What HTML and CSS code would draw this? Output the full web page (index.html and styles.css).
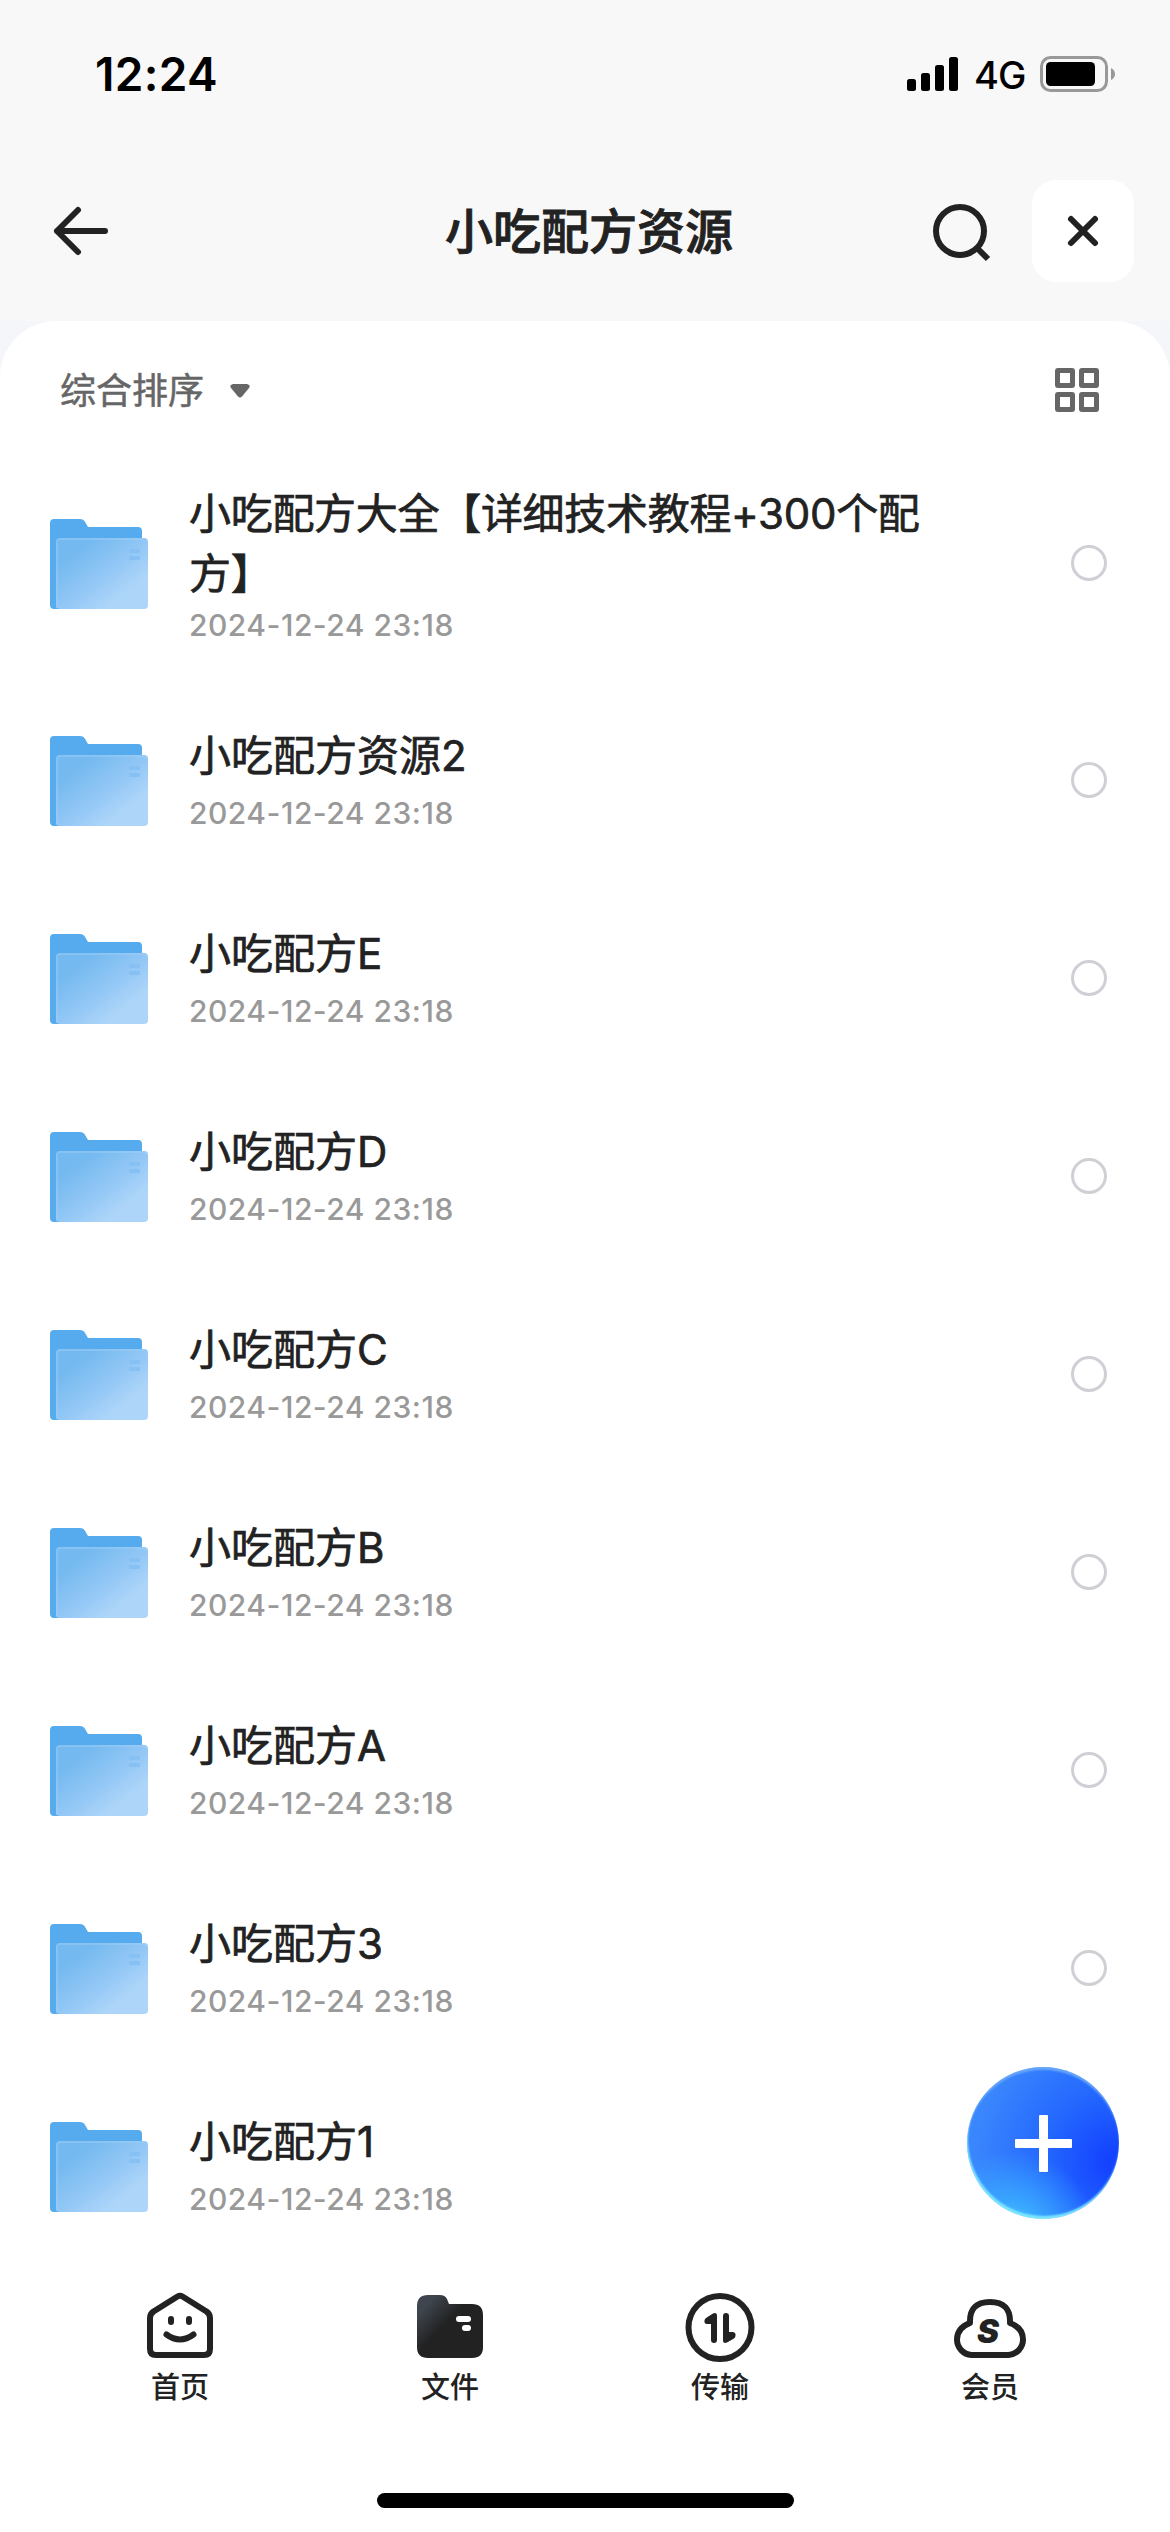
FILE: index.html
```
<!DOCTYPE html>
<html lang="zh-CN">
<head>
    <meta charset="UTF-8">
    <meta name="viewport" content="width=device-width, initial-scale=1.0">
    <title>小吃配方资源</title>
    <link rel="stylesheet" href="styles.css">
</head>
<body>
    <!-- 公用的文件夹图标 -->
    <svg class="defs" width="0" height="0">
        <defs>
            <linearGradient id="front" x1="0.1" y1="0.15" x2="0.85" y2="0.9">
                <stop offset="0.1" stop-color="#74b9ef"/>
                <stop offset="0.55" stop-color="#94c8f6"/>
                <stop offset="0.85" stop-color="#add5f9"/>
            </linearGradient>
            <symbol id="folder" viewBox="0 0 98 90">
                <path d="M4 0H30Q33 0 34.500 2L38 8H88Q92 8 92 12V40L20 90H4Q0 90 0 86V4Q0 0 4 0Z" fill="#55abee"/>
                <rect x="6" y="19" width="92" height="71" rx="4" fill="url(#front)"/>
                <path d="M7 89V23Q7 20 10 20H94Q97 20 97 23" fill="none" stroke="#a6d2f7" stroke-opacity="0.4" stroke-width="2"/>
                <rect x="79" y="30" width="11" height="4" rx="1" fill="#87c0f3"/>
                <rect x="79" y="37" width="11" height="4" rx="1" fill="#87c0f3"/>
            </symbol>
        </defs>
    </svg>

    <div class="status">
        <span class="time">12:24</span>
        <div class="signal">
            <svg width="51" height="34" viewBox="0 0 51 34">
                <rect x="0" y="22" width="9" height="12" rx="2.500"/>
                <rect x="14" y="16" width="9" height="18" rx="2.500"/>
                <rect x="28" y="8" width="9" height="26" rx="2.500"/>
                <rect x="42" y="0" width="9" height="34" rx="2.500"/>
            </svg>
            <span class="net">4G</span>
            <svg width="75" height="36" viewBox="0 0 75 36">
                <rect x="1.500" y="1.500" width="65" height="33" rx="9" fill="none" stroke="#999" stroke-width="3"/>
                <rect x="6" y="6" width="49" height="24" rx="4.500"/>
                <path d="M71 12Q75 14 75 18T71 24Z" fill="#999"/>
            </svg>
        </div>
    </div>

    <div class="header">
        <svg class="back" width="54" height="48" viewBox="0 0 54 48">
            <path d="M24 3L3 24L24 45M3 24H51"/>
        </svg>
        <h1>小吃配方资源</h1>
        <svg class="search" width="58" height="58" viewBox="0 0 58 58">
            <circle cx="27" cy="27" r="24"/>
            <path d="M44 44L55 55"/>
        </svg>
        <button class="close">
            <svg width="30" height="30" viewBox="0 0 30 30">
                <path d="M3 3L27 27M27 3L3 27"/>
            </svg>
        </button>
    </div>

    <div class="sheet">
        <div class="sheet-inner">
            <div class="sort">
                <span class="sort-text">综合排序</span>
                <svg class="arrow" width="20" height="14" viewBox="0 0 20 14">
                    <path d="M3 0H17Q21 1 19 4L12 12.500Q10 14.500 8 12.500L1 4Q-1 1 3 0Z"/>
                </svg>
                <svg class="grid" width="44" height="44" viewBox="0 0 44 44">
                    <rect x="2.500" y="2.500" width="15" height="15" rx="0.500"/>
                    <rect x="26.500" y="2.500" width="15" height="15" rx="0.500"/>
                    <rect x="2.500" y="26.500" width="15" height="15" rx="0.500"/>
                    <rect x="26.500" y="26.500" width="15" height="15" rx="0.500"/>
                </svg>
            </div>
            <ul class="list">
                <li class="tall">
                    <svg class="folder"><use href="#folder"/></svg>
                    <div class="info"><p class="name">小吃配方大全【详细技术教程+300个配方】</p><p class="date">2024-12-24 23:18</p></div>
                    <i class="radio"></i>
                </li>
                <li>
                    <svg class="folder"><use href="#folder"/></svg>
                    <div class="info"><p class="name">小吃配方资源2</p><p class="date">2024-12-24 23:18</p></div>
                    <i class="radio"></i>
                </li>
                <li>
                    <svg class="folder"><use href="#folder"/></svg>
                    <div class="info"><p class="name">小吃配方E</p><p class="date">2024-12-24 23:18</p></div>
                    <i class="radio"></i>
                </li>
                <li>
                    <svg class="folder"><use href="#folder"/></svg>
                    <div class="info"><p class="name">小吃配方D</p><p class="date">2024-12-24 23:18</p></div>
                    <i class="radio"></i>
                </li>
                <li>
                    <svg class="folder"><use href="#folder"/></svg>
                    <div class="info"><p class="name">小吃配方C</p><p class="date">2024-12-24 23:18</p></div>
                    <i class="radio"></i>
                </li>
                <li>
                    <svg class="folder"><use href="#folder"/></svg>
                    <div class="info"><p class="name">小吃配方B</p><p class="date">2024-12-24 23:18</p></div>
                    <i class="radio"></i>
                </li>
                <li>
                    <svg class="folder"><use href="#folder"/></svg>
                    <div class="info"><p class="name">小吃配方A</p><p class="date">2024-12-24 23:18</p></div>
                    <i class="radio"></i>
                </li>
                <li>
                    <svg class="folder"><use href="#folder"/></svg>
                    <div class="info"><p class="name">小吃配方3</p><p class="date">2024-12-24 23:18</p></div>
                    <i class="radio"></i>
                </li>
                <li>
                    <svg class="folder"><use href="#folder"/></svg>
                    <div class="info"><p class="name">小吃配方1</p><p class="date">2024-12-24 23:18</p></div>
                </li>
            </ul>
        </div>
    </div>

    <!-- 悬浮的新建按钮 -->
    <button class="add">
        <svg width="57" height="57" viewBox="0 0 57 57">
            <rect x="24" y="0" width="9" height="57" rx="1"/>
            <rect x="0" y="24" width="57" height="9" rx="1"/>
        </svg>
    </button>

    <div class="tabbar">
        <a class="tab">
            <svg width="72" height="72" viewBox="0 0 72 72">
                <path class="line" d="M33.500 7.500Q36 6 38.500 7.500L62.500 22.500Q66 25 66 29V60Q66 66 60 66H12Q6 66 6 60V29Q6 25 9.500 22.500Z"/>
                <path class="line" d="M27 30V33M45 30V33M22.500 45.500Q36 55.500 49.500 45.500"/>
            </svg>
            <span>首页</span>
        </a>
        <a class="tab">
            <svg width="72" height="72" viewBox="0 0 72 72">
                <defs>
                    <linearGradient id="dark" x1="0.1" y1="0.1" x2="0.65" y2="0.6">
                        <stop offset="0.1" stop-color="#3e454e"/>
                        <stop offset="0.65" stop-color="#222"/>
                    </linearGradient>
                </defs>
                <path d="M14 6H26Q31 6 33 10L35 15H58Q69 15 69 26V58Q69 69 58 69H14Q3 69 3 58V17Q3 6 14 6Z" fill="url(#dark)"/>
                <rect x="42" y="27" width="15" height="6" rx="3" fill="#fff"/>
                <rect x="48" y="36" width="9" height="6" rx="3" fill="#fff"/>
            </svg>
            <span>文件</span>
        </a>
        <a class="tab">
            <svg width="72" height="72" viewBox="0 0 72 72">
                <circle class="line" cx="36" cy="38.500" r="31.500"/>
                <path class="fill" d="M27 27V35H22.500Q20 34.500 20.500 31.500Q20.500 30 22 29L29 24.500Q33 23 33 27V51Q33 54 30 54T27 51Z"/>
                <path class="fill" d="M39 27Q39 24 42 24T45 27V43H49Q52 43.500 51.500 46.500Q51.500 48.500 50 49.500L43 53.500Q39 55 39 51Z"/>
            </svg>
            <span>传输</span>
        </a>
        <a class="tab">
            <svg width="72" height="72" viewBox="0 0 72 72">
                <path class="line" d="M17.500 66A15.500 15.500 0 0 1 3 50.500Q3 39 16 34Q15 13 36 13T56 34Q69 39 69 50.500A15.500 15.500 0 0 1 54.500 66Z"/>
                <text class="vip" x="23" y="54">S</text>
            </svg>
            <span>会员</span>
        </a>
    </div>
    <div class="home-bar"></div>
</body>
</html>
```
FILE: styles.css
```
*{
    margin: 0;
    padding: 0;
    box-sizing: border-box;
}
body{
    width: 1170px;
    height: 2532px;
    overflow: hidden;
    position: relative;
    display: flex;
    flex-direction: column;
    background: #fff;
    color: #222;
    font-family: Inter, "Noto Sans CJK SC", sans-serif;
}
svg{
    display: block;
    flex: none;
    overflow: visible;
}
button{
    border: none;
    display: flex;
    align-items: center;
    justify-content: center;
}
.defs{
    position: absolute;
}
/* 状态栏 */
.status{
    height: 148px;
    padding: 0 55px 0 95px;
    display: flex;
    align-items: center;
    justify-content: space-between;
    background: #f8f8f8;
    color: #000;
}
.time{
    font-size: 46px;
    font-weight: 600;
    letter-spacing: 0.3px;
}
.signal{
    display: flex;
    align-items: center;
}
.net{
    width: 82px;
    padding: 2px 0 0 16px;
    font-size: 38px;
    font-weight: 500;
    letter-spacing: -1px;
}
/* 顶部导航 */
.header{
    height: 173px;
    padding: 0 36px 7px 54px;
    display: flex;
    align-items: center;
    background: #f8f8f8;
}
.back, .search, .close svg{
    fill: none;
    stroke: #222;
    stroke-width: 6px;
}
.back, .close svg{
    stroke-linecap: round;
    stroke-linejoin: round;
}
.header h1{
    flex: 1;
    padding: 2px 0 0 337px;
    font-size: 48px;
    font-weight: 500;
    line-height: 60px;
    -webkit-text-stroke: 0.9px #222;
}
.search{
    margin: 3px 41px 0 0;
}
.close{
    width: 102px;
    height: 102px;
    border-radius: 24px;
    background: #fff;
}
/* 文件列表 */
.sheet{
    height: 1944px;
    background: linear-gradient(#f4f6f9, #f4f6f9) no-repeat 0 0 / 100% 80px;
}
.sheet-inner{
    height: 100%;
    border-radius: 56px 56px 0 0;
    background: #fff;
}
.sort{
    height: 123px;
    padding: 31px 71px 16px 60px;
    display: flex;
    align-items: center;
    color: #666;
    font-size: 36px;
}
.sort-text{
    padding-bottom: 5px;
    -webkit-text-stroke: 0.5px #666;
}
.arrow{
    margin: 1px 0 0 26px;
    fill: #666;
}
.grid{
    margin-left: auto;
    fill: none;
    stroke: #666;
    stroke-width: 5px;
}
.list{
    list-style: none;
}
.list li{
    height: 198px;
    padding: 0 63px 0 50px;
    display: flex;
    align-items: center;
}
.list .tall{
    height: 237px;
}
.folder{
    width: 98px;
    height: 90px;
    margin-top: 2px;
}
.info{
    width: 740px;
    margin-left: 41px;
}
.tall .info{
    padding-top: 5px;
}
.name{
    font-size: 42px;
    font-weight: 400;
    line-height: 60px;
    margin-bottom: 5px;
    padding-top: 1px;
    -webkit-text-stroke: 0.7px #222;
}
.tall .name{
    margin-bottom: -1px;
    letter-spacing: -0.3px;
}
.date{
    color: #999;
    font-size: 30px;
    font-weight: 500;
    line-height: 44px;
    letter-spacing: 0.5px;
}
.radio{
    width: 36px;
    height: 36px;
    margin-left: auto;
    border: 3px solid #d0cfd6;
    border-radius: 50%;
}
/* 新建按钮 */
.add{
    position: absolute;
    left: 967px;
    top: 2067px;
    width: 152px;
    height: 152px;
    border-radius: 50%;
    background:
        radial-gradient(circle at 30% 110%, #45c8ff 0%, rgba(60, 180, 255, 0.7) 18%, rgba(40, 130, 255, 0) 42%),
        radial-gradient(circle at 98% 62%, #1443ff 5%, rgba(26, 90, 255, 0.7) 40%, rgba(40, 120, 255, 0) 80%),
        #3a86fd;
    box-shadow: inset 0 4px 2px -1px #66a6fa, inset 1px -3px 2px #7ce6ff;
}
.add svg{
    fill: #fff;
}
/* 底部标签 */
.tabbar{
    height: 228px;
    padding: 24px 45px 0;
    display: flex;
}
.tab{
    flex: 1;
    display: flex;
    flex-direction: column;
    align-items: center;
}
.tab span{
    margin-top: 5px;
    font-size: 29px;
    font-weight: 500;
    line-height: 44px;
}
.line{
    fill: none;
    stroke: #222;
    stroke-width: 6px;
    stroke-linecap: round;
    stroke-linejoin: round;
}
.fill{
    fill: #222;
}
.vip{
    font-size: 33px;
    font-weight: 900;
    font-style: italic;
    fill: #222;
}
.home-bar{
    width: 417px;
    height: 15px;
    margin-left: 377px;
    border-radius: 8px;
    background: #000;
}
```
